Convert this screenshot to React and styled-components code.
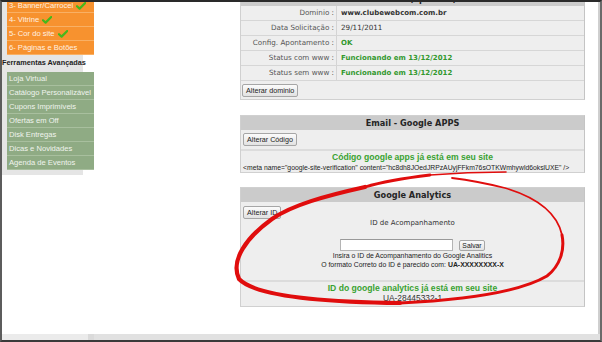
import React from "react";
import styled, { createGlobalStyle } from "styled-components";

const GlobalStyle = createGlobalStyle`
  html, body {
    margin: 0;
    padding: 0;
    background: #fff;
    overflow: hidden;
  }
`;

const Frame = styled.div`
  position: relative;
  width: 602px;
  height: 342px;
  box-sizing: border-box;
  border-top: 2px solid #2a2a2a;
  border-left: 2px solid #5c5c5c;
  border-bottom: 2px solid #3a3a3a;
  border-right: 2px solid #6a6a6a;
  box-shadow: inset -2px 0 0 #cfcfcf;
  background: #fff;
  display: flex;
  flex-direction: column;
  overflow: hidden;
`;

const Scroller = styled.div`
  flex: 1;
  min-height: 0;
  overflow: hidden;
`;

const Page = styled.div`
  display: flex;
  align-items: flex-start;
  margin-top: -11px;
`;

const Sidebar = styled.nav`
  flex: 0 0 81px;
  min-width: 0;
  background: #e5e5e5;
  padding: 8px 0 5px;
  font-family: "Liberation Sans", Arial, sans-serif;
`;

const tones = {
  orange: { bg: "#f7922f", line: "#f9b064", text: "#fff1e2" },
  green: { bg: "#8fab84", line: "#a8bf9e", text: "#f0f4ee" },
};

const MenuItem = styled.div`
  width: 85px;
  height: 13px;
  margin-left: 5px;
  padding-left: 2px;
  display: flex;
  align-items: center;
  gap: 3px;
  white-space: nowrap;
  font-size: 7.6px;
  color: ${(p) => tones[p.$tone].text};
  background: ${(p) => tones[p.$tone].bg};
  border-bottom: 1px solid ${(p) => tones[p.$tone].line};
`;

const SectionTitle = styled.div`
  padding: 3px 0 4px 0;
  line-height: 10px;
  font-size: 7.3px;
  font-weight: bold;
  color: #1e1e1e;
  white-space: nowrap;
`;

const Main = styled.main`
  flex: 1;
  padding-left: 157px;
  display: flex;
  flex-direction: column;
`;

const Panel = styled.section`
  width: 345px;
  box-sizing: border-box;
  margin-top: ${(p) => p.$gap || 0}px;
  border: 1px solid #d0d0d0;
  border-right-color: #c4c4c4;
  background: #eeeeee;
  font-family: "DejaVu Sans", Verdana, sans-serif;
`;

const PanelHeader = styled.h3`
  margin: 0;
  height: 14px;
  line-height: 15px;
  text-align: center;
  background: #cbcbcb;
  font-size: 8.2px;
  font-weight: bold;
  color: #252525;
`;

const InfoRow = styled.div`
  display: flex;
  height: 14px;
  line-height: 14px;
  border-bottom: 1px solid #d6d6d6;
  font-size: 7.2px;
`;

const Label = styled.div`
  flex: 0 0 96px;
  padding-right: 2px;
  box-sizing: border-box;
  text-align: right;
  color: #555;
  border-right: 1px solid #d4d4d4;
  white-space: nowrap;
`;

const Value = styled.div`
  padding-left: 4px;
  white-space: nowrap;
  font-weight: ${(p) => (p.$bold ? "bold" : "normal")};
  color: ${(p) => (p.$ok ? "#33992f" : "#333")};
  font-size: ${(p) => (p.$bold ? "7px" : "7.2px")};
`;

const ButtonRow = styled.div`
  padding: ${(p) => p.$pad || "3px 1px"};
  display: flex;
`;

const Button = styled.button`
  height: 13px;
  padding: 0 3px;
  font-family: "Liberation Sans", Arial, sans-serif;
  font-size: 7.2px;
  line-height: 11px;
  color: #222;
  background: linear-gradient(#fbfbfb, #e2e2e2);
  border: 1px solid #a6a6a6;
  border-radius: 2px;
  cursor: pointer;
`;

const Notice = styled.div`
  border-top: 2px solid #dcdcdc;
  padding: ${(p) => p.$pad || "1px 0 0"};
  text-align: center;
  font-family: "Liberation Sans", Arial, sans-serif;
`;

const Success = styled.div`
  line-height: 11px;
  font-size: 8.6px;
  font-weight: bold;
  color: #39a231;
  white-space: nowrap;
`;

const MetaCode = styled.div`
  line-height: 9px;
  font-size: 6.8px;
  color: #222;
  text-align: left;
  padding-left: 2px;
  white-space: nowrap;
`;

const TrackingId = styled.div`
  line-height: 9px;
  font-size: 8.4px;
  color: #333;
`;

const Caption = styled.div`
  text-align: center;
  line-height: 9px;
  font-size: 7px;
  color: #333;
`;

const FormLine = styled.div`
  margin-top: 11px;
  display: flex;
  justify-content: center;
  align-items: center;
  gap: 6px;
`;

const TextInput = styled.input`
  width: 113px;
  height: 12px;
  box-sizing: border-box;
  padding: 0 2px;
  border: 1px solid #b4b4b4;
  border-top-color: #999;
  background: #fff;
  outline: none;
`;

const SmallButton = styled(Button)`
  height: 11px;
  line-height: 9px;
  padding: 0 2px;
  font-size: 6.8px;
`;

const Hints = styled.div`
  padding-bottom: 11px;
  text-align: center;
  font-family: "Liberation Sans", Arial, sans-serif;
  font-size: 6.9px;
  line-height: 9px;
  color: #222;
  white-space: nowrap;
  b {
    font-weight: bold;
  }
`;

const StatusBar = styled.div`
  flex: 0 0 6px;
  display: flex;
  background: #e1e1e1;
`;

const StatusCell = styled.div`
  width: 86px;
  background: #ebebeb;
  border-right: 6px solid #dadada;
`;

const Scribble = styled.svg`
  position: absolute;
  top: -2px;
  left: -2px;
  width: 602px;
  height: 342px;
  pointer-events: none;
`;

function Check() {
  return (
    <svg width="10" height="8" viewBox="0 0 10 8">
      <path d="M1 4.2 L3.6 6.6 L9.2 1" fill="none" stroke="#45b81c" strokeWidth="2.2" strokeLinecap="round" strokeLinejoin="round" />
    </svg>
  );
}

const steps = [
  { text: "3- Banner/Carrocel", done: true },
  { text: "4- Vitrine", done: true },
  { text: "5- Cor do site", done: true },
  { text: "6- Páginas e Botões", done: false },
];

const tools = [
  "Loja Virtual",
  "Catálogo Personalizável",
  "Cupons Imprimíveis",
  "Ofertas em Off",
  "Disk Entregas",
  "Dicas e Novidades",
  "Agenda de Eventos",
];

const domainInfo = [
  { label: "Dominio :", value: "www.clubewebcom.com.br", bold: true },
  { label: "Data Solicitação :", value: "29/11/2011" },
  { label: "Config. Apontamento :", value: "OK", bold: true, ok: true },
  { label: "Status com www :", value: "Funcionando em 13/12/2012", bold: true, ok: true },
  { label: "Status sem www :", value: "Funcionando em 13/12/2012", bold: true, ok: true },
];

// hand-drawn red circle over the analytics box
const strokes = [
  { d: "M506 172 C490 172, 455 173, 430 175", w: 1.6 },
  { d: "M430 175 C405 178, 385 181, 365 187", w: 2.8 },
  { d: "M365 187 C325 196, 292 205, 272 219 C247 237, 230 260, 239 279 C255 296, 320 302, 400 303", w: 4.2 },
  { d: "M400 303 C460 300, 520 292, 547 276 C560 266, 565 250, 562 235", w: 3 },
  { d: "M562 235 C557 212, 535 197, 505 188 C485 183, 468 180, 452 178", w: 1.8 },
];

export default function App() {
  return (
    <>
      <GlobalStyle />
      <Frame>
        <Scroller>
          <Page>
            <Sidebar>
              {steps.map((s) => (
                <MenuItem key={s.text} $tone="orange">
                  {s.text}
                  {s.done && <Check />}
                </MenuItem>
              ))}
              <SectionTitle>Ferramentas Avançadas</SectionTitle>
              {tools.map((t) => (
                <MenuItem key={t} $tone="green">
                  {t}
                </MenuItem>
              ))}
            </Sidebar>

            <Main>
              <Panel>
                <PanelHeader>Domínio (opcional)</PanelHeader>
                {domainInfo.map((r) => (
                  <InfoRow key={r.label}>
                    <Label>{r.label}</Label>
                    <Value $bold={r.bold} $ok={r.ok}>
                      {r.value}
                    </Value>
                  </InfoRow>
                ))}
                <ButtonRow $pad="3px 1px 2px">
                  <Button>Alterar dominio</Button>
                </ButtonRow>
              </Panel>

              <Panel $gap={15}>
                <PanelHeader>Email - Google APPS</PanelHeader>
                <ButtonRow $pad="3px 2px">
                  <Button>Alterar Código</Button>
                </ButtonRow>
                <Notice>
                  <Success>Código google apps já está em seu site</Success>
                  <MetaCode>
                    {'<meta name="google-site-verification" content="hc8dh8JOedJRPzAUyjFFkm76sOTKWmhywld6okslUXE" />'}
                  </MetaCode>
                </Notice>
              </Panel>

              <Panel $gap={14}>
                <PanelHeader>Google Analytics</PanelHeader>
                <ButtonRow $pad="4px 2px 0">
                  <Button>Alterar ID</Button>
                </ButtonRow>
                <Caption>ID de Acompanhamento</Caption>
                <FormLine>
                  <TextInput type="text" />
                  <SmallButton>Salvar</SmallButton>
                </FormLine>
                <Hints>
                  <div>Insira o ID de Acompanhamento do Google Analitics</div>
                  <div>
                    O formato Correto do ID é parecido com: <b>UA-XXXXXXXX-X</b>
                  </div>
                </Hints>
                <Notice $pad="1px 0 3px">
                  <Success>ID do google analytics já está em seu site</Success>
                  <TrackingId>UA-28445332-1</TrackingId>
                </Notice>
              </Panel>
            </Main>
          </Page>
        </Scroller>
        <StatusBar>
          <StatusCell />
        </StatusBar>
        <Scribble viewBox="0 0 602 342">
          {strokes.map((s, i) => (
            <path key={i} d={s.d} fill="none" stroke="#e00d0d" strokeWidth={s.w} strokeLinecap="round" />
          ))}
        </Scribble>
      </Frame>
    </>
  );
}
